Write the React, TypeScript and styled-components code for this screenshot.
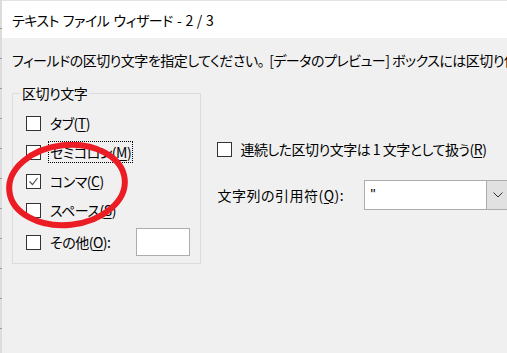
import React from "react";
import styled, { createGlobalStyle } from "styled-components";

const GlobalStyle = createGlobalStyle`
  html, body {
    margin: 0;
    padding: 0;
    background: #f0f0f0;
  }
  body {
    font-family: "Noto Sans CJK JP", "Noto Sans", sans-serif;
    font-feature-settings: "palt";
    letter-spacing: -0.5px;
    color: #000;
  }
`;

const Window = styled.div`
  position: relative;
  display: flex;
  width: 507px;
  height: 353px;
  overflow: hidden;
  background: #f0f0f0;
`;

const Rail = styled.div`
  flex: 0 0 2px;
  background: repeating-linear-gradient(
    to bottom,
    #dcdcdc 0,
    #dcdcdc 28px,
    #9a9a9a 28px,
    #9a9a9a 29px,
    #dcdcdc 29px,
    #dcdcdc 30px
  );
`;

const Main = styled.div`
  flex: 1;
  min-width: 0;
  display: flex;
  flex-direction: column;
`;

const TitleBar = styled.div`
  height: 38px;
  box-sizing: border-box;
  border-top: 1px solid #e3e3e3;
  background: #fff;
  display: flex;
  align-items: center;
  padding-left: 10px;
  font-size: 14px;
  word-spacing: 1.5px;
  white-space: nowrap;
`;

const Instruction = styled.div`
  margin-top: 12px;
  padding-left: 10px;
  font-size: 14px;
  line-height: 20px;
  white-space: nowrap;
  overflow: hidden;
`;

const Stop = styled.span`
  margin-right: 5px;
`;

const Content = styled.div`
  display: flex;
  align-items: flex-start;
  gap: 16px;
  margin-top: 13px;
  padding-left: 10px;
`;

const GroupBox = styled.fieldset`
  flex: 0 0 189px;
  width: 189px;
  box-sizing: border-box;
  margin: 0;
  border: 1px solid #dcdcdc;
  padding: 9px 10px 7px 13px;
  display: flex;
  flex-direction: column;
  gap: 7px;
`;

const Legend = styled.legend`
  margin-left: -6px;
  padding: 0 2px;
  font-size: 14px;
  line-height: 20px;
`;

const Row = styled.div`
  display: flex;
  align-items: center;
  gap: 7px;
  height: 22px;
  font-size: 14px;
  white-space: nowrap;
`;

const Box = styled.span`
  flex: 0 0 auto;
  width: 15px;
  height: 15px;
  box-sizing: border-box;
  border: 1px solid #333;
  background: #fff;
  display: flex;
  align-items: center;
  justify-content: center;
`;

const Label = styled.span<{ $focused?: boolean }>`
  padding: 0 1px;
  line-height: 20px;
  border: 1px dotted ${(p) => (p.$focused ? "#000" : "transparent")};
`;

const Key = styled.u`
  text-underline-offset: 2px;
`;

const SmallInput = styled.div`
  width: 54px;
  height: 28px;
  box-sizing: border-box;
  margin-left: 17px;
  border: 1px solid #adadad;
  background: #fff;
`;

const OtherRow = styled(Row)`
  height: 28px;
`;

const RightColumn = styled.div`
  flex: 0 0 auto;
  display: flex;
  flex-direction: column;
  gap: 20px;
  margin-top: 55px;
`;

const CheckRow = styled(Row)`
  gap: 6px;
`;

const ComboRow = styled.div`
  display: flex;
  align-items: center;
  gap: 14px;
  font-size: 14px;
  white-space: nowrap;
`;

const ComboLabel = styled.span`
  min-width: 133px;
  letter-spacing: 0.5px;
`;

const Combo = styled.div`
  display: flex;
  width: 146px;
  height: 30px;
  box-sizing: border-box;
  border: 1px solid #adadad;
  background: #fff;
  flex: 0 0 auto;
`;

const ComboValue = styled.div`
  flex: 1;
  padding-left: 5px;
  font-family: "Liberation Sans", sans-serif;
  font-size: 14px;
  line-height: 26px;
`;

const ComboButton = styled.div`
  width: 22px;
  border-left: 1px solid #adadad;
  background: #e1e1e1;
  display: flex;
  align-items: center;
  justify-content: center;
`;

const Annotation = styled.svg`
  position: absolute;
  left: 0;
  top: 130px;
  pointer-events: none;
`;

function CheckBox({ checked }: { checked?: boolean }) {
  return (
    <Box>
      {checked && (
        <svg width="11" height="11" viewBox="0 0 11 11">
          <polyline
            points="1.5,5.5 4.5,8.5 9.5,2"
            fill="none"
            stroke="#555"
            strokeWidth="1.2"
          />
        </svg>
      )}
    </Box>
  );
}

const delimiters = [
  { text: "タブ", key: "T" },
  { text: "セミコロン", key: "M", focused: true },
  { text: "コンマ", key: "C", checked: true },
  { text: "スペース", key: "S" },
];

export default function App() {
  return (
    <>
      <GlobalStyle />
      <Window>
        <Rail />
        <Main>
          <TitleBar>テキスト ファイル ウィザード - 2 / 3</TitleBar>
          <Instruction>
            フィールドの区切り文字を指定してください。<Stop />[データのプレビュー]
            ボックスには区切り位置が表示されます。
          </Instruction>
          <Content>
            <GroupBox>
              <Legend>区切り文字</Legend>
              {delimiters.map((d) => (
                <Row key={d.key}>
                  <CheckBox checked={d.checked} />
                  <Label $focused={d.focused}>
                    {d.text}(<Key>{d.key}</Key>)
                  </Label>
                </Row>
              ))}
              <OtherRow>
                <CheckBox />
                <Label>
                  その他(<Key>O</Key>):
                </Label>
                <SmallInput />
              </OtherRow>
            </GroupBox>
            <RightColumn>
              <CheckRow>
                <CheckBox />
                <Label>
                  連続した区切り文字は 1 文字として扱う(<Key>R</Key>)
                </Label>
              </CheckRow>
              <ComboRow>
                <ComboLabel>
                  文字列の引用符(<Key>Q</Key>):
                </ComboLabel>
                <Combo>
                  <ComboValue>"</ComboValue>
                  <ComboButton>
                    <svg width="10" height="6" viewBox="0 0 10 6">
                      <polyline
                        points="0.5,0.5 5,5 9.5,0.5"
                        fill="none"
                        stroke="#333"
                        strokeWidth="1"
                      />
                    </svg>
                  </ComboButton>
                </Combo>
              </ComboRow>
            </RightColumn>
          </Content>
        </Main>
        <Annotation width="140" height="110" viewBox="0 0 140 110">
          <ellipse
            cx="67"
            cy="55"
            rx="58"
            ry="40"
            transform="rotate(-6 67 55)"
            fill="none"
            stroke="#ec1c24"
            strokeWidth="6"
          />
        </Annotation>
      </Window>
    </>
  );
}
